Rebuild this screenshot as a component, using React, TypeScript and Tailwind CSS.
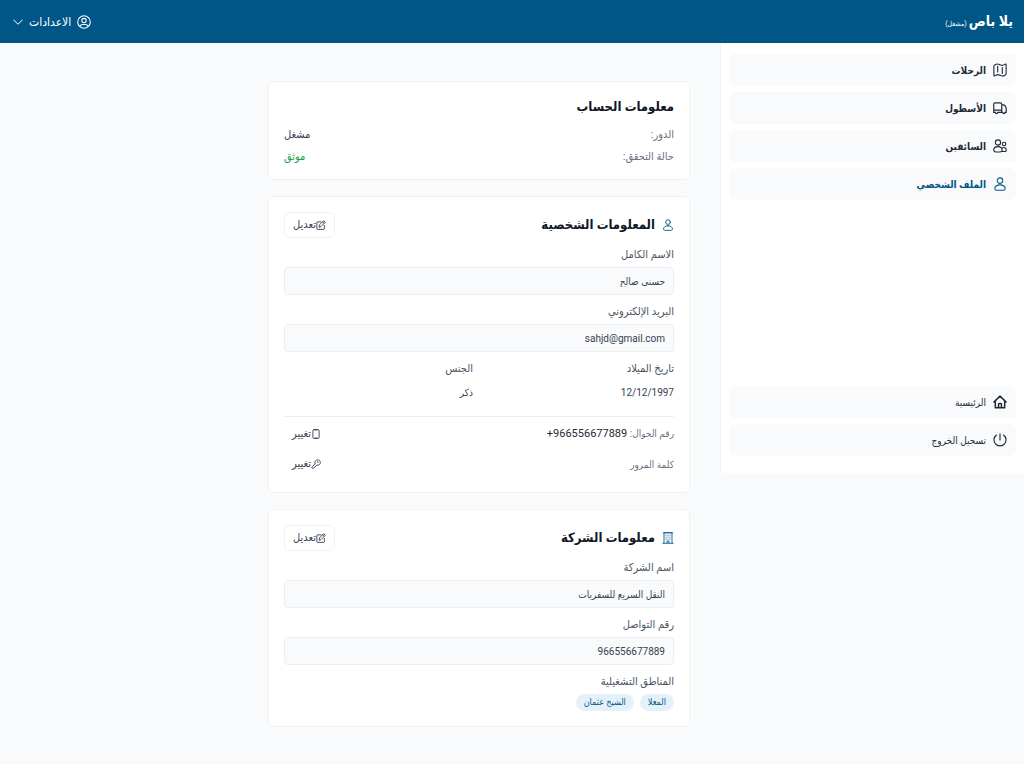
import type { ReactNode } from "react";

type IconProps = { className?: string };

function Svg({ className, children, width = 1.5 }: IconProps & { children: ReactNode; width?: number }) {
  return (
    <svg
      viewBox="0 0 24 24"
      fill="none"
      stroke="currentColor"
      strokeWidth={width}
      strokeLinecap="round"
      strokeLinejoin="round"
      aria-hidden="true"
      className={className}
    >
      {children}
    </svg>
  );
}

const MapIcon = ({ className }: IconProps) => (
  <Svg className={className} width={1.9}>
    <path d="M1.5 5.5c0-1.5 3.5-3.7 6-3.7 3 0 5.5 2.2 8.5 2.2 2.5 0 4-2 5.5-2 .7 0 1 .6 1 1.5v15c0 1.5-3.5 3.7-6 3.7-3 0-5.5-2.2-8.5-2.2-2.5 0-4 2-5.5 2-.7 0-1-.6-1-1.5z" />
    <path d="M8 5.5v10M16 8v10" />
  </Svg>
);

const TruckIcon = ({ className }: IconProps) => (
  <Svg className={className} width={2}>
    <path d="M3.5 19.5H1.3V5.3C1.3 4 2.200 3.200 3.500 3.200H12.700C14 3.200 15 4 15 5.300v14.200H8M15 6.500h2c3.500 0 5.700 4 5.700 8.500v4.500h-2M15 19.500h1.500M1.300 15.500H15" />
    <path d="M4 19.500c0 2.700 4 2.700 4 0M16.700 19.500c0 2.700 4 2.700 4 0" />
  </Svg>
);

const UsersIcon = ({ className }: IconProps) => (
  <Svg className={className} width={1.9}>
    <circle cx="8.500" cy="6" r="4.500" />
    <path d="M8.500 13c-4.700 0-7.200 3-7.200 6 0 2 1.500 3.300 3.700 3.300h7c2.200 0 3.700-1.300 3.700-3.300 0-3-2.500-6-7.200-6z" />
    <circle cx="19" cy="8.500" r="3" />
    <path d="M15.500 15.300c3.700-2 7.300.2 7.300 3.400 0 1.800-1 2.800-2.800 2.800h-4" />
  </Svg>
);

const UserIcon = ({ className }: IconProps) => (
  <Svg className={className} width={1.8}>
    <circle cx="12" cy="6.200" r="4.700" />
    <path d="M12 13.500c-5.200 0-9 3.200-9 6.300 0 1.800 1.300 2.900 3.200 2.900h11.600c1.900 0 3.200-1.100 3.200-2.900 0-3.100-3.800-6.300-9-6.300z" />
  </Svg>
);

const HomeIcon = ({ className }: IconProps) => (
  <Svg className={className} width={2.6}>
    <path d="M1.500 12 12 2l10.500 10M4 10v12h16V10M9.500 22v-6c0-1 .5-1.500 1.500-1.500h2c1 0 1.500.5 1.500 1.500v6" />
  </Svg>
);

const PowerIcon = ({ className }: IconProps) => (
  <Svg className={className} width={2}>
    <path d="M12 1.500V12M6 3.500a10.300 10.300 0 1 0 12 0" />
  </Svg>
);

const UserCircleIcon = ({ className }: IconProps) => (
  <Svg className={className} width={1.8}>
    <circle cx="12" cy="12" r="10.800" />
    <circle cx="12" cy="9.500" r="3.700" />
    <path d="M5 19.500c1-2.500 2.700-3.200 4.500-3.200h5c1.800 0 3.500.7 4.500 3.200" />
  </Svg>
);

const ChevronIcon = ({ className }: IconProps) => (
  <Svg className={className} width={2.4}>
    <path d="M1.500 7 12 17.500 22.500 7" />
  </Svg>
);

const EditIcon = ({ className }: IconProps) => (
  <Svg className={className} width={2.2}>
    <path d="M12 4.500H3.500C2.500 4.500 2 5 2 6v15c0 1 .5 1.500 1.500 1.500h15c1 0 1.500-.5 1.500-1.500v-8" />
    <path d="m7.500 16.500 1.200-5L18.500 1.700l3.800 3.800L12.500 15.300zM16 4.500l3.500 3.500" />
  </Svg>
);

const BuildingIcon = ({ className }: IconProps) => (
  <Svg className={className} width={1.7}>
    <path d="M1.500 22.500h21M4 22V1.500h16V22M2.500 1.500h19M10 22v-4h4v4" />
    <path strokeWidth={1.3} d="M8 6v1M12 6v1M16 6v1M8 10v1M12 10v1M16 10v1M8 14v1M12 14v1M16 14v1" />
  </Svg>
);

const PhoneIcon = ({ className }: IconProps) => (
  <Svg className={className} width={2.2}>
    <rect x="4.500" y="1.300" width="15" height="21.400" rx="3" />
    <path d="M9.500 2.500h5M9.500 21.500h5" />
  </Svg>
);

const KeyIcon = ({ className }: IconProps) => (
  <Svg className={className} width={2.2}>
    <path d="M9.500 11.500C8 6 11.500 2 16 2c4 0 6.500 3 6.500 6.500 0 4-4 7.500-8.500 6L7.500 21c-1 1-2 1.500-3.500 1.500-1.500 0-2-1-2-2 0-1 .5-2 1.500-3z" />
    <path d="M15.500 6.500c1.500-.5 2.500.5 2 2" />
  </Svg>
);

function NavItem({
  icon,
  children,
  tone,
}: {
  icon: ReactNode;
  children: ReactNode;
  tone: string;
}) {
  return (
    <li>
      <a href="#" className={`flex h-8 items-center gap-[7px] rounded-md bg-[#f9fafb] px-[9px] text-[10px] ${tone}`}>
        {icon}
        <span>{children}</span>
      </a>
    </li>
  );
}

function Card({ children, padding = "p-[15px]" }: { children: ReactNode; padding?: string }) {
  return <section className={`rounded-md border border-[#eff1f3] bg-white ${padding}`}>{children}</section>;
}

function CardHeader({ icon, title }: { icon: ReactNode; title: string }) {
  return (
    <div className="flex h-[26px] items-center justify-between">
      <h2 className="flex items-center gap-[7px] text-[13px] leading-5 font-bold text-[#111827]">
        {icon}
        {title}
      </h2>
      <button
        type="button"
        className="flex h-[26px] items-center rounded-md border border-[#eff1f3] px-2 text-[11px] text-[#374151]"
      >
        <EditIcon className="size-[10px]" />
        تعديل
      </button>
    </div>
  );
}

function Field({ id, label, value }: { id: string; label: string; value: string }) {
  return (
    <div className="mt-2">
      <label htmlFor={id} className="block text-[11px] leading-[18px] text-[#4b5563]">
        {label}
      </label>
      <input
        id={id}
        readOnly
        value={value}
        className="mt-[3px] block h-7 w-full rounded border border-[#eceef1] bg-[#f9fafb] px-2 text-right text-[10px] text-[#374151]"
      />
    </div>
  );
}

function ChangeButton({ icon }: { icon: ReactNode }) {
  return (
    <button type="button" className="flex h-[26px] items-center px-2 text-[11px] font-medium text-[#374151]">
      {icon}
      تغيير
    </button>
  );
}

export default function App() {
  return (
    <div
      dir="rtl"
      lang="ar"
      className="flex min-h-screen flex-col bg-[#f9fafb] font-['Roboto','DejaVu_Sans_Condensed','DejaVu_Sans',sans-serif]"
    >
      <header className="flex h-[43px] items-center justify-between bg-[#005687] pr-[11px] pl-[13px] text-white">
        <h1 className="flex items-baseline gap-[2px] text-[14px] font-bold">
          يلا باص
          <span className="text-[7px] font-normal">(مشغل)</span>
        </h1>
        <button type="button" className="flex items-center gap-[6px] text-[12px]">
          <UserCircleIcon className="size-[14px]" />
          الاعدادات
          <ChevronIcon className="size-[10px]" />
        </button>
      </header>

      <div className="flex flex-col items-stretch md:flex-row md:items-start">
        <aside className="flex shrink-0 flex-col justify-between border-l border-[#f3f4f6] bg-white px-2 pt-[11px] pb-[17px] md:min-h-[430px] md:w-[304px]">
          <nav aria-label="القائمة">
            <ul className="flex flex-col gap-[6px]">
              <NavItem tone="font-bold text-[#1f2937]" icon={<MapIcon className="size-[14px]" />}>الرحلات</NavItem>
              <NavItem tone="font-bold text-[#1f2937]" icon={<TruckIcon className="size-[14px]" />}>الأسطول</NavItem>
              <NavItem tone="font-bold text-[#1f2937]" icon={<UsersIcon className="size-[14px]" />}>السائقين</NavItem>
              <NavItem tone="font-bold text-[#005687]" icon={<UserIcon className="size-[14px]" />}>الملف الشخصي</NavItem>
            </ul>
          </nav>
          <ul className="mt-6 flex flex-col gap-[6px]">
            <NavItem tone="text-[#1f2937]" icon={<HomeIcon className="size-[14px]" />}>الرئيسية</NavItem>
            <NavItem tone="text-[#1f2937]" icon={<PowerIcon className="size-[14px]" />}>تسجيل الخروج</NavItem>
          </ul>
        </aside>

        <main className="min-w-0 flex-1 px-[30px] pt-[38px] pb-[38px]">
          <div className="flex max-w-[422px] flex-col gap-4">
            <Card padding="px-[15px] pt-[15px] pb-[11px]">
              <h2 className="text-[13px] leading-5 font-bold text-[#111827]">معلومات الحساب</h2>
              <dl className="mt-[7px] text-[11px] leading-[22px]">
                <div className="flex justify-between">
                  <dt className="text-[#6b7280]">الدور:</dt>
                  <dd className="text-[#374151]">مشغل</dd>
                </div>
                <div className="flex justify-between">
                  <dt className="text-[#6b7280]">حالة التحقق:</dt>
                  <dd className="text-[#16a34a]">موثق</dd>
                </div>
              </dl>
            </Card>

            <Card>
              <CardHeader
                title="المعلومات الشخصية"
                icon={<UserIcon className="size-3 text-[#005687]" />}
              />
              <Field id="full-name" label="الاسم الكامل" value="حسني صالح" />
              <Field id="email" label="البريد الإلكتروني" value="sahjd@gmail.com" />
              <dl className="mt-2 grid grid-cols-2 gap-x-3 leading-[18px]">
                <div>
                  <dt className="text-[11px] text-[#4b5563]">تاريخ الميلاد</dt>
                  <dd className="mt-[6px] text-[10px] text-[#374151]">12/12/1997</dd>
                </div>
                <div>
                  <dt className="text-[11px] text-[#4b5563]">الجنس</dt>
                  <dd className="mt-[6px] text-[10px] text-[#374151]">ذكر</dd>
                </div>
              </dl>
              <div className="mt-[14px] flex flex-col gap-1 border-t border-[#eceef1] pt-1 text-[10px] text-[#6b7280]">
                <div className="flex items-center justify-between">
                  <p>
                    رقم الجوال:{" "}
                    <span dir="ltr" className="text-[11px] text-[#1f2937]">+966556677889</span>
                  </p>
                  <ChangeButton icon={<PhoneIcon className="size-[10px]" />} />
                </div>
                <div className="flex items-center justify-between">
                  <p>كلمة المرور</p>
                  <ChangeButton icon={<KeyIcon className="size-[10px]" />} />
                </div>
              </div>
            </Card>

            <Card>
              <CardHeader
                title="معلومات الشركة"
                icon={<BuildingIcon className="size-3 text-[#005687]" />}
              />
              <Field id="company" label="اسم الشركة" value="النقل السريع للسفريات" />
              <Field id="contact" label="رقم التواصل" value="966556677889" />
              <h3 className="mt-2 text-[11px] leading-[18px] text-[#4b5563]">المناطق التشغيلية</h3>
              <ul className="mt-[3px] flex gap-[6px] text-[9px] leading-[17px] text-[#005687]">
                <li className="rounded-full bg-[#e5f1f8] px-2">المعلا</li>
                <li className="rounded-full bg-[#e5f1f8] px-2">الشيخ عثمان</li>
              </ul>
            </Card>
          </div>
        </main>
      </div>
    </div>
  );
}
